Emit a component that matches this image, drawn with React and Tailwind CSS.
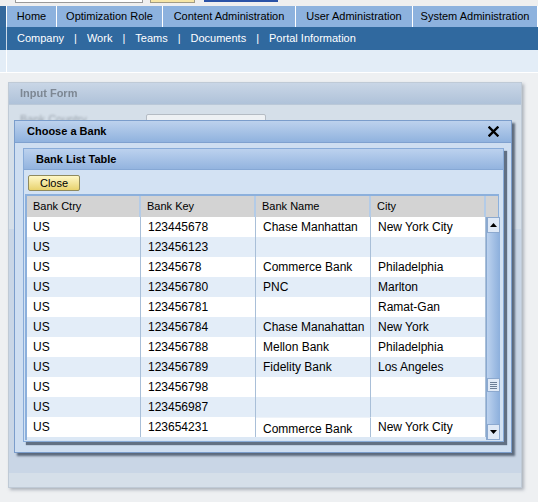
import React from 'react';

// Bank chooser dialog over a portal page

const tabs = [
  { label: 'Home', w: 'w-[50px]' },
  { label: 'Optimization Role', w: 'w-[106px]' },
  { label: 'Content Administration', w: 'w-[133px]' },
  { label: 'User Administration', w: 'w-[117px]' },
  { label: 'System Administration', w: 'flex-1' },
];

const subLinks = ['Company', 'Work', 'Teams', 'Documents', 'Portal Information'];

const rows = [
  ['US', '123445678', 'Chase Manhattan', 'New York City'],
  ['US', '123456123', '', ''],
  ['US', '12345678', 'Commerce Bank', 'Philadelphia'],
  ['US', '123456780', 'PNC', 'Marlton'],
  ['US', '123456781', '', 'Ramat-Gan'],
  ['US', '123456784', 'Chase Manahattan', 'New York'],
  ['US', '123456788', 'Mellon Bank', 'Philadelphia'],
  ['US', '123456789', 'Fidelity Bank', 'Los Angeles'],
  ['US', '123456798', '', ''],
  ['US', '123456987', '', ''],
  ['US', '123654231', 'Commerce Bank', 'New York City'],
];

const columns = ['Bank Ctry', 'Bank Key', 'Bank Name', 'City'];
const colWidths = ['w-[114px]', 'w-[115px]', 'w-[115px]', 'w-[115px]'];

const CloseX = () => (
  <svg width="11" height="11" viewBox="0 0 11 11">
    <path d="M1.5 1.5 L9.5 9.5 M9.5 1.5 L1.5 9.5" stroke="#000" strokeWidth="2.4" strokeLinecap="square" />
  </svg>
);

const Arrow = ({ up }) => (
  <svg width="7" height="4" viewBox="0 0 7 4">
    <path d={up ? 'M0 4 L3.5 0 L7 4 Z' : 'M0 0 L7 0 L3.5 4 Z'} fill="#000" />
  </svg>
);

const ScrollBar = () => (
  <div className="w-[15px] h-[223px] flex flex-col border-l border-[#8aa9d0] bg-gradient-to-r from-[#bcd2ee] to-[#8cafdc]">
    <div className="h-[16px] w-[13px] flex items-center justify-center bg-[#dfe9f6] border border-[#8ca9cf]">
      <Arrow up />
    </div>
    <div className="h-[145px]" />
    <div className="h-[14px] w-[13px] flex flex-col items-center justify-center gap-[1px] bg-[#e1eaf6] border border-[#8ca9cf]">
      <div className="w-[7px] h-[1px] bg-[#6d7f96]" />
      <div className="w-[7px] h-[1px] bg-[#6d7f96]" />
      <div className="w-[7px] h-[1px] bg-[#6d7f96]" />
      <div className="w-[7px] h-[1px] bg-[#6d7f96]" />
    </div>
    <div className="flex-1" />
    <div className="h-[16px] w-[13px] flex items-center justify-center bg-[#dfe9f6] border border-[#8ca9cf]">
      <Arrow />
    </div>
  </div>
);

const BankTable = () => (
  <div className="w-[474px] border-t-2 border-l-2 border-r border-[#8cb0dc] bg-[#dbe7f4]">
    <div className="flex h-[21px] bg-[#d3d3d3] text-[11px] text-black">
      {columns.map((c, i) => (
        <div key={c} className={`${colWidths[i]} flex items-center pl-[6px] border-r-2 border-[#b3cbe7]`}>
          {c}
        </div>
      ))}
      <div className="flex-1" />
    </div>
    <div className="flex">
      <div className="flex flex-col">
        {rows.map((r, ri) => (
          <div key={ri} className={`flex h-[20px] text-[12px] text-black ${ri % 2 === 0 ? 'bg-white' : 'bg-[#e3edf8]'}`}>
            {r.map((cell, ci) => (
              <div
                key={ci}
                className={`${colWidths[ci]} flex items-center border-r border-[#a9bfd8] ${ci === 0 ? 'pl-[6px]' : 'pl-[7px]'} ${ri === 10 && ci === 2 ? 'pt-[2px] border-t border-t-[#eef3f9]' : ''}`}
              >
                {cell}
              </div>
            ))}
          </div>
        ))}
        <div className="h-[3px] bg-[#dce8f5]" />
      </div>
      <ScrollBar />
    </div>
  </div>
);

export default function App() {
  return (
    <div className="relative w-[538px] h-[502px] overflow-hidden bg-[#eef0f2]" style={{ fontFamily: '"Liberation Sans", Arial, sans-serif' }}>
      {/* top strip, only the bottom of the controls shows */}
      <div className="h-[6px] flex items-start bg-[#efefef]">
        <div className="ml-[15px] w-[128px] h-[3px] bg-white border-x border-b border-[#9a9a9a]" />
        <div className="ml-[7px] w-[45px] h-[3px] bg-[#f7e6a6] border-x border-b border-[#a29c84]" />
        <div className="ml-[9px] w-[74px] h-[2px] bg-[#2a52a6]" />
      </div>

      {/* main tabs */}
      <div className="flex h-[21px]">
        <div className="w-[6px] bg-[#35699d]" />
        <div className="w-[1px] bg-white" />
        {tabs.map((t) => (
          <div key={t.label} className={`${t.w} flex items-center justify-center bg-[#8db2de] border-r border-white text-[11px] text-black whitespace-nowrap`}>
            {t.label}
          </div>
        ))}
      </div>

      {/* sub navigation */}
      <div className="flex h-[23px] bg-[#30699f]">
        <div className="w-[6px]" />
        <div className="w-[1px] bg-[#c9d8e8]" />
        <div className="flex items-center gap-[10px] pl-[10px] text-[11px] text-white">
          {subLinks.map((s, i) => (
            <React.Fragment key={s}>
              {i > 0 && <span>|</span>}
              <span>{s}</span>
            </React.Fragment>
          ))}
        </div>
      </div>

      <div className="flex h-[22px] bg-[#e3edf7]">
        <div className="w-[6px]" />
        <div className="w-[1px] bg-white" />
      </div>
      <div className="h-[1px] bg-white" />

      {/* background form panel, mostly hidden by the dialog */}
      <div className="pt-[9px] pl-[8px]">
        <div className="w-[514px] h-[406px] flex flex-col border border-[#bfcad6] bg-[#d5dfe9] shadow-[2px_2px_3px_rgba(110,120,135,0.5)]">
          <div className="h-[22px] flex items-center pl-[11px] bg-gradient-to-b from-[#c9d6e6] to-[#afc2d9] border-b border-[#bac8d8]">
            <span className="text-[11px] font-bold text-[#7d8793] blur-[0.6px]">Input Form</span>
          </div>
          <div className="h-[124px] flex items-start pt-[9px] pl-[11px]">
            <span className="w-[126px] leading-[11px] text-[11px] text-[#9aa3ad] blur-[0.8px]">Bank Country</span>
            <div className="w-[120px] h-[20px] bg-[#eef1f4] border border-[#b5bcc4] rounded-[2px]" />
          </div>
          <div className="flex-1 mb-[14px] bg-[#c9d6e6]" />
        </div>
      </div>

      {/* modal dialog */}
      <div className="absolute left-[14px] top-[120px] w-[498px] h-[333px] flex flex-col border border-[#7b9dcb] bg-[#cedef1] shadow-[3px_3px_2px_rgba(55,70,90,0.75)]">
        <div className="h-[22px] flex items-center justify-between pl-[12px] pr-[12px] bg-gradient-to-b from-[#bdd2ed] to-[#90b2de] border-b border-[#7fa1cf]">
          <span className="text-[11px] font-bold text-black">Choose a Bank</span>
          <CloseX />
        </div>
        <div className="pl-[8px] pt-[5px]">
          <div className="w-[481px] border border-[#88abd8] bg-[#d3e2f3] shadow-[3px_3px_1px_rgba(60,75,95,0.75)]">
            <div className="h-[21px] flex items-center pl-[12px] bg-gradient-to-b from-[#bcd2ee] to-[#93b4df] border-b border-[#86a8d5]">
              <span className="text-[11px] font-bold text-black">Bank List Table</span>
            </div>
            <div className="h-[24px] pl-[4px] pt-[5px]">
              <button className="w-[52px] h-[16px] flex items-center justify-center text-[11px] text-black border border-[#8f8a5e] rounded-[2px] bg-gradient-to-b from-[#fff8c6] to-[#e8d26c]">
                Close
              </button>
            </div>
            <div className="pl-[1px] pb-[1px]">
              <BankTable />
            </div>
          </div>
        </div>
      </div>
    </div>
  );
}
